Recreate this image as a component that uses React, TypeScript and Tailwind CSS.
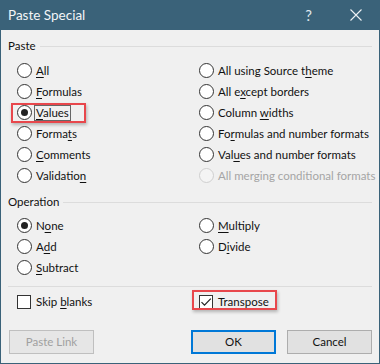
import React from 'react';

const FONT = "font-['Segoe_UI','Lato','Liberation_Sans',sans-serif]";

// label with an underlined access key
function Label({ text, k, disabled }: { text: string; k: number; disabled?: boolean }) {
  return (
    <span className={`whitespace-nowrap ${disabled ? 'text-[#a5a5a5]' : 'text-[#111]'}`}>
      {k < 0 ? (
        text
      ) : (
        <>
          {text.slice(0, k)}
          <span className="underline underline-offset-2">{text[k]}</span>
          {text.slice(k + 1)}
        </>
      )}
    </span>
  );
}

function Radio({ checked, disabled }: { checked?: boolean; disabled?: boolean }) {
  return (
    <span
      className={`w-[15px] h-[15px] rounded-full border flex items-center justify-center shrink-0 ${
        disabled ? 'border-[#cfcfcf] bg-[#f4f4f4]' : 'border-[#333] bg-white'
      }`}
    >
      {checked && <span className="w-[7px] h-[7px] rounded-full bg-[#222]" />}
    </span>
  );
}

function Check({ checked }: { checked?: boolean }) {
  return (
    <span className="w-[14px] h-[14px] border border-[#333] bg-white flex items-center justify-center shrink-0">
      {checked && (
        <svg width="12" height="12" viewBox="0 0 12 12">
          <path d="M1.5 6.2 L4.5 9.2 L10.8 2.6" fill="none" stroke="#222" strokeWidth="1.2" />
        </svg>
      )}
    </span>
  );
}

type Opt = { text: string; k: number; checked?: boolean; disabled?: boolean; focus?: boolean; mark?: boolean };

function Option({ o }: { o: Opt }) {
  return (
    <div className="relative flex items-center gap-[4px] h-[21px]">
      {o.mark && (
        <span className="absolute left-[-6px] top-[1px] w-[75px] h-[20px] border-2 border-[#e8474c] shadow-[1px_2px_3px_rgba(0,0,0,0.25)]" />
      )}
      <Radio checked={o.checked} disabled={o.disabled} />
      <span className={o.focus ? 'border border-[#666] px-[1px] -ml-[2px] leading-[14px]' : ''}>
        <Label text={o.text} k={o.k} disabled={o.disabled} />
      </span>
    </div>
  );
}

function Group({ title }: { title: string }) {
  return (
    <div className="flex items-center gap-[4px] h-[16px]">
      <span className="text-[#111]">{title}</span>
      <span className="flex-1 h-px bg-[#dcdcdc]" />
    </div>
  );
}

const pasteLeft: Opt[] = [
  { text: 'All', k: 0 },
  { text: 'Formulas', k: 0 },
  { text: 'Values', k: 0, checked: true, focus: true, mark: true },
  { text: 'Formats', k: 5 },
  { text: 'Comments', k: 0 },
  { text: 'Validation', k: 9 },
];

const pasteRight: Opt[] = [
  { text: 'All using Source theme', k: 18 },
  { text: 'All except borders', k: 5 },
  { text: 'Column widths', k: 7 },
  { text: 'Formulas and number formats', k: 2 },
  { text: 'Values and number formats', k: 3 },
  { text: 'All merging conditional formats', k: -1, disabled: true },
];

function Btn({ children, primary, disabled }: { children: React.ReactNode; primary?: boolean; disabled?: boolean }) {
  return (
    <button
      className={`w-[85px] h-[24px] bg-[#e1e1e1] flex items-center justify-center ${
        primary
          ? 'border-2 border-[#0078d7] text-[#111]'
          : disabled
          ? 'border border-[#bfbfbf] text-[#a0a0a0] bg-[#e6e6e6]'
          : 'border border-[#adadad] text-[#111]'
      }`}
    >
      {children}
    </button>
  );
}

export default function App() {
  return (
    <div className={`w-[380px] h-[364px] flex flex-col bg-[#f0f0f0] text-[11.5px] ${FONT}`}>
      {/* title bar */}
      <div className="h-[30px] bg-[#3a6279] flex items-center pl-[8px] text-white shrink-0">
        <span className="text-[13.5px] text-[#f2f5f7]">Paste Special</span>
        <span className="ml-auto text-[15px] text-[#dfe7ec] mr-[38px]">?</span>
        <svg width="12" height="12" viewBox="0 0 12 12" className="mr-[18px]">
          <path d="M0.5 0.5 L11.5 11.5 M11.5 0.5 L0.5 11.5" stroke="#eef2f5" strokeWidth="1.1" />
        </svg>
      </div>

      <div className="flex-1 flex flex-col border-x border-b border-[#3a6279] px-[7px] pt-[8px]">
        <Group title="Paste" />
        <div className="grid grid-cols-[182px_1fr] pl-[9px] mt-[6px]">
          <div className="flex flex-col">
            {pasteLeft.map((o) => (
              <Option key={o.text} o={o} />
            ))}
          </div>
          <div className="flex flex-col">
            {pasteRight.map((o) => (
              <Option key={o.text} o={o} />
            ))}
          </div>
        </div>

        <div className="mt-[8px]">
          <Group title="Operation" />
        </div>
        <div className="grid grid-cols-[182px_1fr] pl-[9px] mt-[5px]">
          <div className="flex flex-col">
            <Option o={{ text: 'None', k: 1, checked: true }} />
            <Option o={{ text: 'Add', k: 1 }} />
            <Option o={{ text: 'Subtract', k: 0 }} />
          </div>
          <div className="flex flex-col">
            <Option o={{ text: 'Multiply', k: 0 }} />
            <Option o={{ text: 'Divide', k: 1 }} />
          </div>
        </div>

        <div className="h-px bg-[#dcdcdc] mt-[8px]" />

        <div className="grid grid-cols-[182px_1fr] pl-[9px] mt-[5px] h-[20px] items-center">
          <div className="flex items-center gap-[5px]">
            <Check />
            <Label text="Skip blanks" k={5} />
          </div>
          <div className="relative flex items-center gap-[5px]">
            <span className="absolute left-[-7px] top-[-3px] w-[85px] h-[20px] border-2 border-[#e8474c] shadow-[1px_2px_3px_rgba(0,0,0,0.25)]" />
            <Check checked />
            <Label text="Transpose" k={8} />
          </div>
        </div>

        <div className="flex items-center mt-[18px] pl-px">
          <Btn disabled>Paste Link</Btn>
          <div className="ml-auto flex gap-[11px]">
            <Btn primary>OK</Btn>
            <Btn>Cancel</Btn>
          </div>
        </div>
      </div>
    </div>
  );
}
